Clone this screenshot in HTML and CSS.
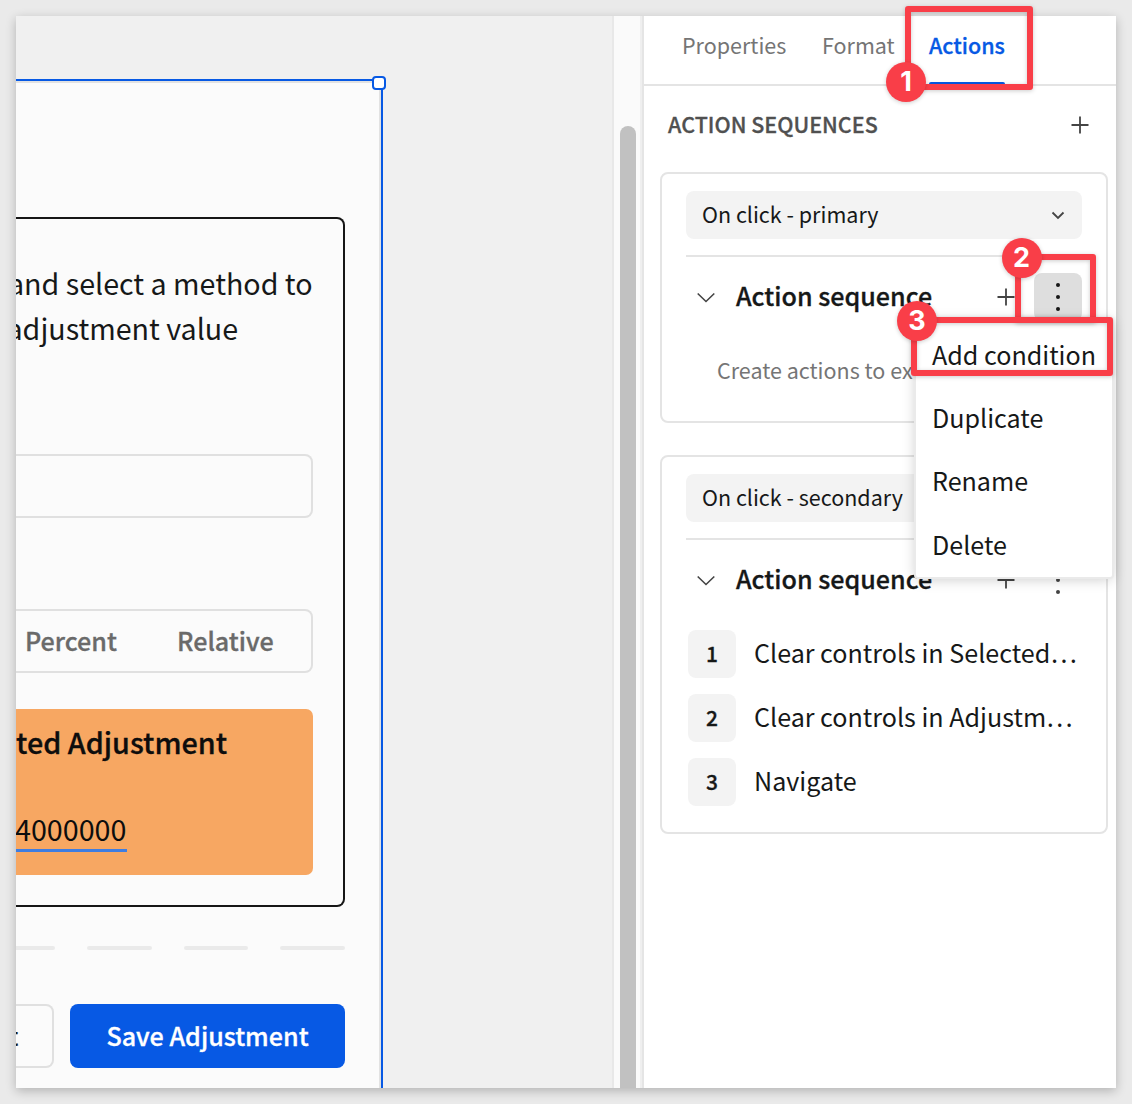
FILE: index.html
```html
<!DOCTYPE html>
<html lang="en">
<head>
<meta charset="utf-8">
<title>Action sequences</title>
<link rel="stylesheet" href="styles.css">
</head>
<body>
<main class="window">
  <section class="canvas">
    <div class="page">
      <span class="handle"></span>
      <div class="card">
        <p class="intro"><span class="line line-a">and select a method to</span><span class="line line-b">adjustment value</span></p>
        <div class="input"></div>
        <div class="segments"><span class="percent">Percent</span><span class="relative">Relative</span></div>
        <div class="summary">
          <h3>ted Adjustment</h3>
          <div class="amount">4000000</div>
        </div>
      </div>
      <div class="dashes"><i></i><i></i><i></i><i></i></div>
      <div class="buttons">
        <button class="reset"><span>t</span></button>
        <button class="save"><span>Save Adjustment</span></button>
      </div>
    </div>
  </section>
  <div class="gutter"><div class="thumb"></div></div>
  <aside class="panel">
    <nav class="tabs">
      <span class="tab properties">Properties</span>
      <span class="tab format">Format</span>
      <span class="tab active">Actions</span>
    </nav>
    <header class="heading">
      <h2>ACTION SEQUENCES</h2>
      <svg class="plus" viewBox="0 0 20 20"><path d="M10 1.5v17M1.5 10h17"/></svg>
    </header>
    <section class="sequence first">
      <div class="select"><span class="primary">On click - primary</span>
        <svg class="caret" viewBox="0 0 14 10"><path d="M1.5 2.500l5.500 5.500 5.500-5.500"/></svg></div>
      <div class="title-row">
        <svg class="chevron" viewBox="0 0 20 12"><path d="M1.700 2.500l8.300 8 8.300-8"/></svg>
        <h3>Action sequence</h3>
        <svg class="plus" viewBox="0 0 20 20"><path d="M10 1.500v17M1.500 10h17"/></svg>
        <span class="kebab pressed"><svg viewBox="0 0 6 28"><circle cx="3" cy="2" r="2"/><circle cx="3" cy="14" r="2"/><circle cx="3" cy="26" r="2"/></svg></span>
      </div>
      <p class="hint">Create actions to ex</p>
    </section>
    <section class="sequence second">
      <div class="select"><span class="secondary">On click - secondary</span></div>
      <div class="title-row">
        <svg class="chevron" viewBox="0 0 20 12"><path d="M1.700 2.500l8.300 8 8.300-8"/></svg>
        <h3>Action sequence</h3>
        <svg class="plus" viewBox="0 0 20 20"><path d="M10 1.500v17M1.500 10h17"/></svg>
        <span class="kebab"><svg viewBox="0 0 6 28"><circle cx="3" cy="2" r="2"/><circle cx="3" cy="14" r="2"/><circle cx="3" cy="26" r="2"/></svg></span>
      </div>
      <ol class="steps">
        <li><b>1</b><span class="step-a">Clear controls in Selected…</span></li>
        <li><b>2</b><span class="step-b">Clear controls in Adjustm…</span></li>
        <li><b>3</b><span class="step-c">Navigate</span></li>
      </ol>
    </section>
  </aside>
</main>
<ul class="menu">
  <li>Add condition</li>
  <li>Duplicate</li>
  <li>Rename</li>
  <li>Delete</li>
</ul>
<div class="callout box-1"></div>
<div class="callout box-2"></div>
<div class="callout box-3"></div>
<div class="badge badge-1">1</div>
<div class="badge badge-2">2</div>
<div class="badge badge-3">3</div>
</body>
</html>
```
FILE: styles.css
```css
* { box-sizing: border-box; margin: 0; padding: 0; }
body {
  width: 1132px; height: 1104px; padding: 16px; overflow: hidden; position: relative;
  background: #eaeaea; color: #161818;
  font-family: "Noto Sans CJK SC", "Noto Sans CJK JP", sans-serif;
  font-size: 25.1px; font-weight: 400; white-space: nowrap;
}
h2, h3, .active, .segments, .save, .steps b { font-weight: 500; -webkit-text-stroke: .3px currentColor; }
svg { display: block; fill: none; stroke: #444; stroke-width: 1.8; flex: none; }

.window {
  display: grid; grid-template-columns: 596px 32px 472px;
  width: 1100px; height: 1072px; overflow: hidden;
  background: #fff; box-shadow: 0 3px 10px rgba(0,0,0,.24);
}

/* Canvas */
.canvas { background: #f0f0f0; padding-top: 63px; overflow: hidden; }
.page {
  position: relative; width: 367px; height: 1040px; background: #fbfbfb;
  border-top: 2px solid #0759e4; border-right: 2px solid #0759e4;
  box-shadow: inset -2px 2px #e2e2e2; padding: 136px 36px 0 0;
}
.handle {
  position: absolute; right: -5px; top: -5px; width: 14px; height: 14px;
  border: 2px solid #0759e4; border-radius: 4px; background: #fff;
}
.card {
  width: 329px; height: 690px; padding: 41px 30px 0 0;
  border: 2px solid #161616; border-left: 0; border-radius: 0 8px 8px 0; overflow: hidden;
}
.intro { font-size: 28.65px; line-height: 45px; height: 194px; }
.line { display: block; margin-left: -8px; }
.line-b { margin-left: -9.5px; }
.input { height: 64px; border: 2px solid #e0e0e0; border-left: 0; border-radius: 0 8px 8px 0; }
.segments {
  display: flex; height: 64px; margin-top: 91px; padding-left: 9px;
  border: 2px solid #e0e0e0; border-left: 0; border-radius: 0 8px 8px 0;
  color: #6a6a6a; line-height: 58px;
}
.percent { width: 152px; }
.summary { height: 166px; margin-top: 36px; background: #f7a762; border-radius: 0 7px 7px 0; color: #0d0d0d; }
.summary h3 { font-size: 28.75px; line-height: 64px; padding-top: 1px; height: 97px; }
.amount { width: 111px; height: 46px; border-bottom: 3px solid #3f7de0; font-size: 28.7px; line-height: 45px; text-indent: -1px; }
.dashes { display: flex; gap: 32px; width: 329px; margin-top: 39px; }
.dashes i { flex: 1; height: 4px; border-radius: 2px; background: #eaeaea; }
.dashes i:first-child { flex: 0 0 39px; border-radius: 0 2px 2px 0; }
.buttons { display: flex; gap: 16px; width: 329px; margin-top: 54px; }
button { height: 64px; font: inherit; font-weight: 500; line-height: 58px; }
.reset { width: 38px; border: 2px solid #e0e0e0; border-left: 0; border-radius: 0 8px 8px 0; background: #fbfbfb; color: #161818; text-align: left; overflow: hidden; text-indent: -7.5px; padding-bottom: 2px; }
.save { width: 275px; border: 0; border-radius: 8px; background: #0759e4; color: #fff; padding-bottom: 2px; }

.gutter {
  border-left: 2px solid #e8e8e8; border-right: 2px solid #e5e5e5; background: #fafafa;
  box-shadow: inset -2px 0 #efefef; padding: 110px 6px 0;
}
.thumb { width: 16px; height: 970px; border-radius: 8px; background: #c1c1c1; }

/* Side panel */
.tabs { display: flex; height: 70px; padding-left: 38px; border-bottom: 2px solid #e4e4e4; font-size: 21.5px; line-height: 58px; color: #757575; }
.properties { width: 140px; }
.format { width: 107px; }
.active { position: relative; height: 68px; width: 76px; color: #0759e4; }
.active::after { content: ""; position: absolute; left: 0; right: 0; bottom: 0; height: 2px; border-radius: 2px 2px 0 0; background: #0759e4; }
.heading { display: flex; align-items: center; justify-content: space-between; height: 78px; padding: 0 26px 0 24px; }
.heading h2 { font-size: 21.5px; line-height: 76px; padding-bottom: 2px; color: #505050; }
.plus { width: 20px; height: 20px; }
.sequence { width: 448px; margin-left: 16px; padding: 17px 24px 0; border: 2px solid #e4e4e4; border-radius: 8px; }
.first { height: 251px; margin-top: 8px; }
.second { height: 379px; margin-top: 32px; }
.select { display: flex; align-items: center; justify-content: space-between; height: 48px; padding: 0 17px 0 16px; border-radius: 8px; background: #f3f3f3; font-size: 21.5px; line-height: 46px; }
.select span { padding-bottom: 2px; }
.caret { width: 14px; height: 10px; }
.title-row { display: flex; align-items: center; height: 82px; margin-top: 16px; border-top: 2px solid #e4e4e4; padding-left: 10px; }
.title-row h3 { width: 260px; margin-left: 20px; font-size: 25.1px; line-height: 74px; padding-bottom: 4px; }
.chevron { width: 20px; height: 12px; stroke-width: 1.6; }
.kebab { display: grid; place-items: center; width: 48px; height: 48px; margin-left: 18px; border-radius: 8px; }
.kebab svg { width: 6px; height: 28px; fill: #444; stroke: none; }
.pressed { background: #dedede; }
.pressed svg { fill: #161616; }
.hint { font-size: 21.5px; line-height: 46px; padding: 10px 0 0 31px; color: #757575; }
.steps { display: grid; gap: 16px; list-style: none; padding: 10px 0 0 2px; }
.steps li { display: flex; gap: 18px; height: 48px; line-height: 45px; }
.steps b { width: 48px; border-radius: 8px; background: #f3f3f3; font-size: 21px; text-align: center; line-height: 47px; }

/* Open menu */
.menu {
  position: absolute; left: 916px; top: 320px; width: 196px; height: 257px;
  padding: 2.8px 0 0 16px; list-style: none; background: #fff; border-radius: 2px;
  box-shadow: 0 0 0 2px #eaeaea, 0 2px 14px rgba(0,0,0,.22);
}
.menu li { height: 63.3px; line-height: 63px; }

/* Numbered callouts */
.callout { position: absolute; border: 6px solid #f93e48; border-radius: 3px; filter: drop-shadow(0 1px 2px rgba(0,0,0,.2)); }
.box-1 { left: 905px; top: 6px; width: 128px; height: 84px; }
.box-2 { left: 1015px; top: 254px; width: 81px; height: 69px; }
.box-3 { left: 911px; top: 317px; width: 202px; height: 59px; }
.badge {
  position: absolute; width: 40px; height: 40px; border-radius: 50%; background: #f93e48; color: #fff;
  font: 700 27px/40px Inter, sans-serif; text-align: center; box-shadow: 0 1px 4px rgba(0,0,0,.2);
}
.badge-1 { left: 886px; top: 62px; }
.badge-2 { left: 1001.5px; top: 238px; }
.badge-3 { left: 897px; top: 301px; }
```
